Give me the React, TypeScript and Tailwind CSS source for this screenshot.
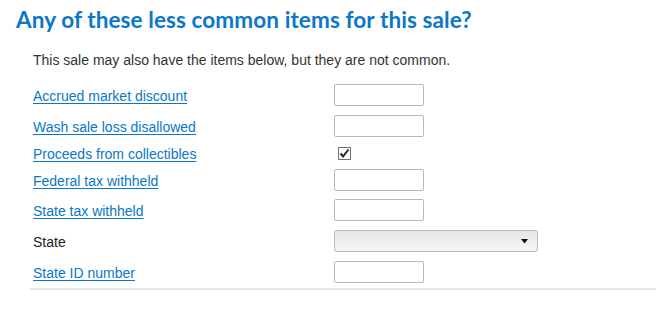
import React from 'react';

const rows: { label: string; kind: 'input' | 'check' | 'select'; link: boolean; mt: string; h: string }[] = [
  { label: 'Accrued market discount', kind: 'input', link: true, mt: 'mt-0', h: 'h-[22px]' },
  { label: 'Wash sale loss disallowed', kind: 'input', link: true, mt: 'mt-[9px]', h: 'h-[22px]' },
  { label: 'Proceeds from collectibles', kind: 'check', link: true, mt: 'mt-[8px]', h: 'h-[16px]' },
  { label: 'Federal tax withheld', kind: 'input', link: true, mt: 'mt-[8px]', h: 'h-[22px]' },
  { label: 'State tax withheld', kind: 'input', link: true, mt: 'mt-[8px]', h: 'h-[22px]' },
  { label: 'State', kind: 'select', link: false, mt: 'mt-[9px]', h: 'h-[22px]' },
  { label: 'State ID number', kind: 'input', link: true, mt: 'mt-[9px]', h: 'h-[22px]' },
];

const Field: React.FC<{ kind: 'input' | 'check' | 'select' }> = ({ kind }) => {
  if (kind === 'check') {
    return (
      <div className="ml-[4px] w-[13px] h-[13px] border border-[#707070] bg-white flex items-center justify-center">
        <svg width="11" height="11" viewBox="0 0 11 11">
          <path d="M1.5 5.5 L4 8.5 L9.5 1.5" fill="none" stroke="#222" strokeWidth="2" />
        </svg>
      </div>
    );
  }
  if (kind === 'select') {
    return (
      <div className="w-[204px] h-[22px] border border-[#b9b9b9] rounded-[3px] bg-gradient-to-b from-[#e6e6e6] to-[#f7f7f7] flex items-center justify-end pr-[9px]">
        <svg width="7" height="5" viewBox="0 0 7 5">
          <path d="M0 0 H7 L3.5 4.5 Z" fill="#111" />
        </svg>
      </div>
    );
  }
  return <div className="w-[90px] h-[22px] border border-[#b9b9b9] rounded-[2px] bg-white" />;
};

export default function App() {
  return (
    <div className="w-[656px] h-[318px] bg-white font-['Liberation_Sans',Arial,sans-serif] overflow-hidden">
      <h1 className="pl-[16px] pt-[6px] text-[22.5px] leading-[28px] font-bold text-[#0a77c8] font-['Lato','Open_Sans',sans-serif] tracking-[0.1px]">
        Any of these less common items for this sale?
      </h1>
      <p className="pl-[33px] mt-[18px] text-[14px] leading-[16px] text-[#333]">
        This sale may also have the items below, but they are not common.
      </p>
      <div className="pl-[33px] mt-[16px]">
        {rows.map(r => (
          <div key={r.label} className={`flex items-center ${r.mt} ${r.h}`}>
            <div className="w-[301px] text-[14px] leading-[16px] pt-[2px]">
              {r.link ? (
                <a href="#" className="text-[#0a77c8] underline underline-offset-[2px]">{r.label}</a>
              ) : (
                <span className="text-[#222]">{r.label}</span>
              )}
            </div>
            <Field kind={r.kind} />
          </div>
        ))}
      </div>
      <div className="ml-[30px] mt-[5px] h-[2px] bg-[#e6e6e6]" />
    </div>
  );
}
